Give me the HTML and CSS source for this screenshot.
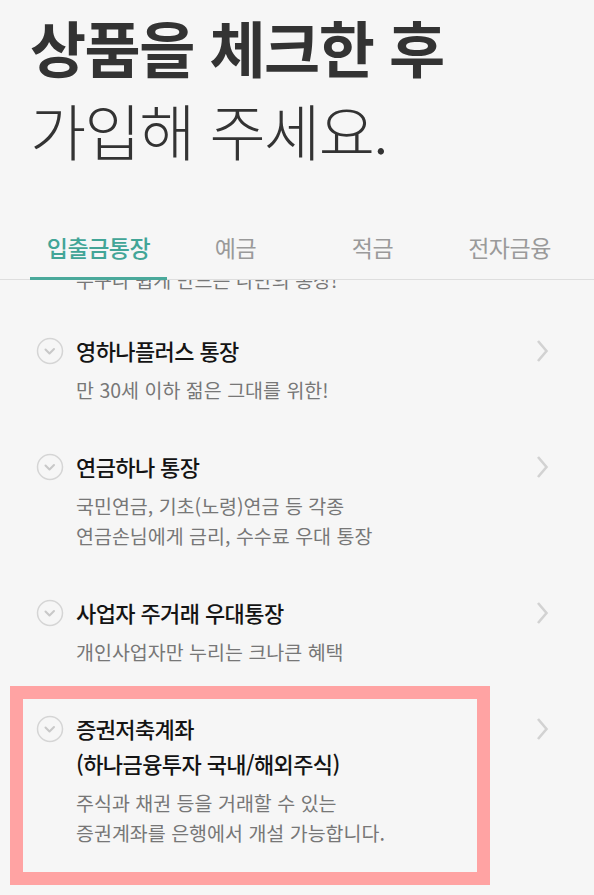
FILE: index.html
```html
<!DOCTYPE html>
<html lang="ko">
<head>
<meta charset="utf-8">
<title>상품 가입</title>
<link rel="stylesheet" href="styles.css">
</head>
<body>
  <header class="header">
    <h1 class="headline">
      <span class="headline-strong">상품을 체크한 후</span>
      <span class="headline-light">가입해 주세요.</span>
    </h1>
  </header>

  <nav class="tabs">
    <a class="tab tab--active">입출금통장</a>
    <a class="tab">예금</a>
    <a class="tab">적금</a>
    <a class="tab">전자금융</a>
  </nav>

  <main class="list">
    <div class="list-inner">
      <div class="item item--clipped">
        <span></span>
        <div class="item-body">
          <p class="desc">누구나 쉽게 만드는 나만의 통장!</p>
        </div>
        <span></span>
      </div>

      <div class="item">
        <svg class="check" viewBox="0 0 28 28" width="28" height="28"><circle cx="14" cy="14" r="12.5" fill="none" stroke="#d5d5d5" stroke-width="1.5"/><path d="M9.5 12.5 L13.5 16.5 L18 12" fill="none" stroke="#c8c8c8" stroke-width="2" stroke-linecap="round" stroke-linejoin="round"/></svg>
        <div class="item-body">
          <h2 class="title">영하나플러스 통장</h2>
          <p class="desc">만 30세 이하 젊은 그대를 위한!</p>
        </div>
        <svg class="chevron" viewBox="0 0 14 24" width="14" height="24"><path d="M3 2 L11.5 12 L3 22" fill="none" stroke="#d2d2d2" stroke-width="2.6"/></svg>
      </div>

      <div class="item">
        <svg class="check" viewBox="0 0 28 28" width="28" height="28"><circle cx="14" cy="14" r="12.5" fill="none" stroke="#d5d5d5" stroke-width="1.5"/><path d="M9.5 12.5 L13.5 16.5 L18 12" fill="none" stroke="#c8c8c8" stroke-width="2" stroke-linecap="round" stroke-linejoin="round"/></svg>
        <div class="item-body">
          <h2 class="title">연금하나 통장</h2>
          <p class="desc">국민연금, 기초(노령)연금 등 각종<br>연금손님에게 금리, 수수료 우대 통장</p>
        </div>
        <svg class="chevron" viewBox="0 0 14 24" width="14" height="24"><path d="M3 2 L11.5 12 L3 22" fill="none" stroke="#d2d2d2" stroke-width="2.6"/></svg>
      </div>

      <div class="item">
        <svg class="check" viewBox="0 0 28 28" width="28" height="28"><circle cx="14" cy="14" r="12.5" fill="none" stroke="#d5d5d5" stroke-width="1.5"/><path d="M9.5 12.5 L13.5 16.5 L18 12" fill="none" stroke="#c8c8c8" stroke-width="2" stroke-linecap="round" stroke-linejoin="round"/></svg>
        <div class="item-body">
          <h2 class="title">사업자 주거래 우대통장</h2>
          <p class="desc">개인사업자만 누리는 크나큰 혜택</p>
        </div>
        <svg class="chevron" viewBox="0 0 14 24" width="14" height="24"><path d="M3 2 L11.5 12 L3 22" fill="none" stroke="#d2d2d2" stroke-width="2.6"/></svg>
      </div>

      <div class="item item--marked">
        <svg class="check" viewBox="0 0 28 28" width="28" height="28"><circle cx="14" cy="14" r="12.5" fill="none" stroke="#d5d5d5" stroke-width="1.5"/><path d="M9.5 12.5 L13.5 16.5 L18 12" fill="none" stroke="#c8c8c8" stroke-width="2" stroke-linecap="round" stroke-linejoin="round"/></svg>
        <div class="item-body">
          <h2 class="title">증권저축계좌<br>(하나금융투자 국내/해외주식)</h2>
          <p class="desc">주식과 채권 등을 거래할 수 있는<br>증권계좌를 은행에서 개설 가능합니다.</p>
        </div>
        <svg class="chevron" viewBox="0 0 14 24" width="14" height="24"><path d="M3 2 L11.5 12 L3 22" fill="none" stroke="#d2d2d2" stroke-width="2.6"/></svg>
        <div class="highlight"></div>
      </div>
    </div>
  </main>
</body>
</html>
```

FILE: styles.css
```css
* { box-sizing: border-box; }

html, body {
  margin: 0;
  padding: 0;
}

body {
  width: 594px;
  height: 895px;
  overflow: hidden;
  background: #f6f6f6;
  font-family: "Noto Sans CJK KR", "Noto Sans", sans-serif;
  color: #222;
}

.header {
  padding: 5px 0 0 30px;
}

.headline {
  margin: 0;
  font-size: 61px;
  line-height: 83px;
  letter-spacing: -1.5px;
  color: #333;
}

.headline-strong {
  display: block;
  font-weight: 700;
}

.headline-light {
  display: block;
  font-weight: 300;
}

.tabs {
  display: flex;
  margin-top: 61px;
  padding-left: 30px;
  border-bottom: 1px solid #dedede;
}

.tab {
  width: 137px;
  text-align: center;
  font-size: 23px;
  line-height: 30px;
  letter-spacing: -0.5px;
  color: #9a9a9a;
  padding-bottom: 15px;
  border-bottom: 3px solid transparent;
  margin-bottom: -1px;
}

.tab--active {
  color: #42a597;
  font-weight: 500;
  border-bottom-color: #4aa99b;
}

.list {
  height: 614px;
  overflow: hidden;
}

.list-inner {
  display: flex;
  flex-direction: column;
  gap: 44px;
}

.item {
  position: relative;
  display: grid;
  grid-template-columns: 28px 1fr 14px;
  column-gap: 12px;
  align-items: start;
  padding: 0 45px 0 36px;
}

.item--clipped {
  margin-top: -15px;
  margin-bottom: -6px;
}

.check {
  margin-top: 4px;
}

.chevron {
  margin-top: 6px;
}

.item-body {
  min-width: 0;
}

.title {
  margin: 0;
  font-size: 22px;
  line-height: 35px;
  font-weight: 500;
  letter-spacing: -0.6px;
  color: #141414;
}

.desc {
  margin: 7px 0 0;
  font-size: 19.5px;
  line-height: 30px;
  font-weight: 400;
  letter-spacing: 0;
  color: #777;
}

.item--clipped .desc {
  margin-top: 0;
}

.highlight {
  position: absolute;
  left: 10px;
  top: -25px;
  width: 480px;
  height: 199px;
  border: 13px solid #ffa3a3;
  pointer-events: none;
}
```
